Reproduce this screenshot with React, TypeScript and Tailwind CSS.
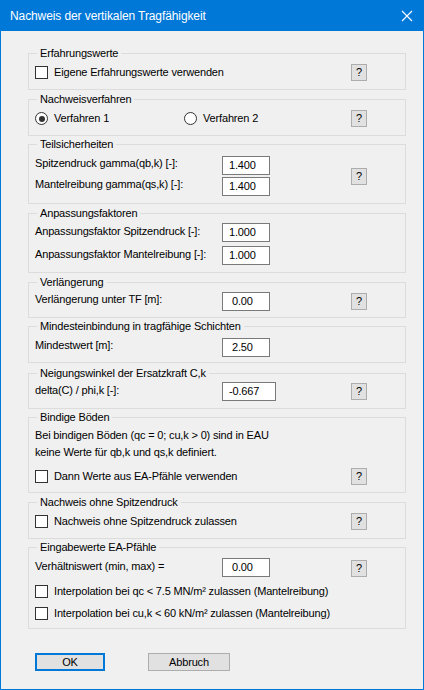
import React from "react";

const font = { fontFamily: '"Liberation Sans", Arial, sans-serif' };

function Check() {
  return <span className="inline-block w-[13px] h-[13px] border border-[#333333] bg-white shrink-0" />;
}

function Radio({ on }: { on?: boolean }) {
  return (
    <span className="w-[13px] h-[13px] rounded-full border border-[#333333] bg-white shrink-0 flex items-center justify-center">
      {on && <span className="w-[6px] h-[6px] rounded-full bg-[#333333]" />}
    </span>
  );
}

function Help() {
  return (
    <span className="w-[16px] h-[17px] bg-[#e1e1e1] border border-[#adadad] flex items-center justify-center text-[11px] leading-none text-black shrink-0">
      ?
    </span>
  );
}

function Field({ v, w = "w-[48px]", pl = "pl-[6px]" }: { v: string; w?: string; pl?: string }) {
  return (
    <span className={`${w} h-[19px] border border-[#7a7a7a] bg-white flex items-center ${pl} text-[11px] text-black shrink-0`}>
      {v}
    </span>
  );
}

function Group({ title, h, pt, mt, children }: { title: string; h: string; pt: string; mt: string; children: React.ReactNode }) {
  return (
    <div className={`relative border border-[#dcdcdc] ${h} ${pt} ${mt} pl-[6px] box-border`}>
      <span className="absolute left-[8px] top-[-8px] px-[3px] bg-[#f0f0f0] text-[11px] leading-[14px] text-black">
        {title}
      </span>
      {children}
    </div>
  );
}

export default function App() {
  return (
    <div style={font} className="w-[424px] h-[690px] bg-[#f0f0f0] border border-[#0078d7] box-border flex flex-col text-[11px] tracking-[-0.16px] text-black">
      <div className="h-[30px] bg-[#0078d7] flex items-center justify-between pl-[9px] pr-[9px] shrink-0">
        <span className="text-white text-[12px] tracking-[-0.1px]">Nachweis der vertikalen Tragfähigkeit</span>
        <svg width="12" height="12" viewBox="0 0 12 12" className="mr-[1px]">
          <path d="M1 1 L11 11 M11 1 L1 11" stroke="white" strokeWidth="1.1" />
        </svg>
      </div>

      <div className="pl-[27px] pr-[17px] pt-[22px] flex flex-col">
        <Group title="Erfahrungswerte" h="h-[37px]" pt="pt-[10px]" mt="mt-0">
          <div className="flex items-center h-[17px]">
            <Check />
            <span className="ml-[6px]">Eigene Erfahrungswerte verwenden</span>
            <span className="ml-auto mr-[38px]"><Help /></span>
          </div>
        </Group>

        <Group title="Nachweisverfahren" h="h-[37px]" pt="pt-[10px]" mt="mt-[9px]">
          <div className="flex items-center h-[17px]">
            <Radio on />
            <span className="ml-[6px] w-[130px]">Verfahren 1</span>
            <Radio />
            <span className="ml-[6px]">Verfahren 2</span>
            <span className="ml-auto mr-[38px]"><Help /></span>
          </div>
        </Group>

        <Group title="Teilsicherheiten" h="h-[60px]" pt="pt-[11px]" mt="mt-[8px]">
          <div className="flex items-center">
            <div className="flex flex-col gap-[2px]">
              <div className="flex items-start h-[19px]">
                <span className="w-[187px] leading-[14px]">Spitzendruck gamma(qb,k) [-]:</span>
                <Field v="1.400" />
              </div>
              <div className="flex items-start h-[19px]">
                <span className="w-[187px] leading-[14px]">Mantelreibung gamma(qs,k) [-]:</span>
                <Field v="1.400" />
              </div>
            </div>
            <span className="ml-auto mr-[38px]"><Help /></span>
          </div>
        </Group>

        <Group title="Anpassungsfaktoren" h="h-[60px]" pt="pt-[9px]" mt="mt-[9px]">
          <div className="flex flex-col gap-[4px]">
            <div className="flex items-start h-[19px]">
              <span className="w-[187px] leading-[16px]">Anpassungsfaktor Spitzendruck [-]:</span>
              <Field v="1.000" />
            </div>
            <div className="flex items-start h-[19px]">
              <span className="w-[187px] leading-[16px]">Anpassungsfaktor Mantelreibung [-]:</span>
              <Field v="1.000" />
            </div>
          </div>
        </Group>

        <Group title="Verlängerung" h="h-[36px]" pt="pt-[9px]" mt="mt-[9px]">
          <div className="flex items-center">
            <span className="w-[187px] self-start leading-[15px]">Verlängerung unter TF [m]:</span>
            <Field v="0.00" pl="pl-[9px]" />
            <span className="ml-auto mr-[38px]"><Help /></span>
          </div>
        </Group>

        <Group title="Mindesteinbindung in tragfähige Schichten" h="h-[37px]" pt="pt-[11px]" mt="mt-[8px]">
          <div className="flex items-start">
            <span className="w-[187px] leading-[14px]">Mindestwert [m]:</span>
            <Field v="2.50" pl="pl-[9px]" />
          </div>
        </Group>

        <Group title="Neigungswinkel der Ersatzkraft C,k" h="h-[36px]" pt="pt-[8px]" mt="mt-[10px]">
          <div className="flex items-center">
            <span className="w-[187px] self-start leading-[17px]">delta(C) / phi,k [-]:</span>
            <Field v="-0.667" w="w-[54px]" pl="pl-[6px]" />
            <span className="ml-auto mr-[38px]"><Help /></span>
          </div>
        </Group>

        <Group title="Bindige Böden" h="h-[76px]" pt="pt-[9px]" mt="mt-[8px]">
          <div className="leading-[17px]">Bei bindigen Böden (qc = 0; cu,k &gt; 0) sind in EAU</div>
          <div className="leading-[17px]">keine Werte für qb,k und qs,k definiert.</div>
          <div className="flex items-center h-[17px] mt-[7px]">
            <Check />
            <span className="ml-[6px]">Dann Werte aus EA-Pfähle verwenden</span>
            <span className="ml-auto mr-[38px]"><Help /></span>
          </div>
        </Group>

        <Group title="Nachweis ohne Spitzendruck" h="h-[37px]" pt="pt-[10px]" mt="mt-[9px]">
          <div className="flex items-center h-[17px]">
            <Check />
            <span className="ml-[6px]">Nachweis ohne Spitzendruck zulassen</span>
            <span className="ml-auto mr-[38px]"><Help /></span>
          </div>
        </Group>

        <Group title="Eingabewerte EA-Pfähle" h="h-[82px]" pt="pt-[10px]" mt="mt-[8px]">
          <div className="flex items-center">
            <span className="w-[187px] self-start leading-[16px]">Verhältniswert (min, max) =</span>
            <Field v="0.00" pl="pl-[9px]" />
            <span className="ml-auto mr-[38px] mt-[2px]"><Help /></span>
          </div>
          <div className="flex items-center h-[17px] mt-[6px]">
            <Check />
            <span className="ml-[6px]">Interpolation bei qc &lt; 7.5 MN/m² zulassen (Mantelreibung)</span>
          </div>
          <div className="flex items-center h-[17px] mt-[5px]">
            <Check />
            <span className="ml-[6px]">Interpolation bei cu,k &lt; 60 kN/m² zulassen (Mantelreibung)</span>
          </div>
        </Group>

        <div className="flex mt-[24px] pl-[7px]">
          <span className="w-[70px] h-[18px] border-2 border-[#0078d7] bg-[#e1e1e1] flex items-center justify-center">OK</span>
          <span className="ml-[43px] w-[82px] h-[18px] border border-[#adadad] bg-[#e1e1e1] flex items-center justify-center">Abbruch</span>
        </div>
      </div>
    </div>
  );
}
